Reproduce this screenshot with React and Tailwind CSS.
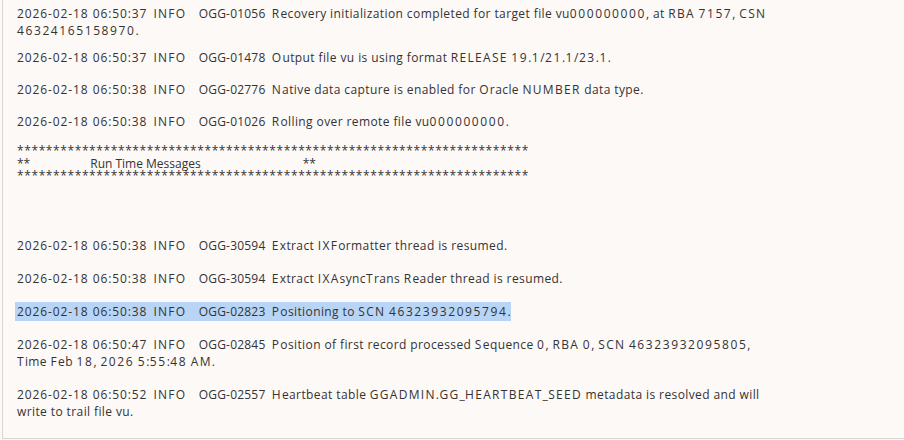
import React from "react";

const entries = [
  { t: "2026-02-18 06:50:37", c: "OGG-01056", m: "Recovery initialization completed for target file vu000000000, at RBA 7157, CSN 46324165158970." },
  { t: "2026-02-18 06:50:37", c: "OGG-01478", m: "Output file vu is using format RELEASE 19.1/21.1/23.1." },
  { t: "2026-02-18 06:50:38", c: "OGG-02776", m: "Native data capture is enabled for Oracle NUMBER data type." },
  { t: "2026-02-18 06:50:38", c: "OGG-01026", m: "Rolling over remote file vu000000000." },
];

const entries2 = [
  { t: "2026-02-18 06:50:38", c: "OGG-30594", m: "Extract IXFormatter thread is resumed." },
  { t: "2026-02-18 06:50:38", c: "OGG-30594", m: "Extract IXAsyncTrans Reader thread is resumed." },
  { t: "2026-02-18 06:50:38", c: "OGG-02823", m: "Positioning to SCN 46323932095794.", hl: true },
  { t: "2026-02-18 06:50:47", c: "OGG-02845", m: "Position of first record processed Sequence 0, RBA 0, SCN 46323932095805, Time Feb 18, 2026 5:55:48 AM." },
  { t: "2026-02-18 06:50:52", c: "OGG-02557", m: "Heartbeat table GGADMIN.GG_HEARTBEAT_SEED metadata is resolved and will write to trail file vu." },
];

// Split message into runs of digits, uppercase letters and other characters,
// so each run can get the letter spacing that matches the reference font widths.
function Msg({ text }) {
  const parts = text.match(/[0-9]+|[A-Z]+|[^0-9A-Z]+/g) || [];
  return parts.map((p, i) => {
    let cls = "tracking-[0.4px]";
    if (/^[0-9]/.test(p)) cls = "tracking-[1.6px]";
    else if (/^[A-Z]/.test(p)) cls = "tracking-[1.3px]";
    return (
      <span key={i} className={cls}>
        {p}
      </span>
    );
  });
}

function Entry({ e, className = "" }) {
  return (
    <p className={"whitespace-pre-wrap " + className}>
      <span className={e.hl ? "bg-[#b8d5f6] -ml-[2px] pl-[2px] py-[1px]" : ""}>
        <span className="tracking-[0.9px]">{e.t}</span>
        {"  "}
        <span className="tracking-[1.2px]">INFO</span>
        {"    "}
        <span className="tracking-[0.2px]">{e.c}</span>
        {"  "}
        <Msg text={e.m} />
      </span>
    </p>
  );
}

const stars = "*".repeat(71);

export default function App() {
  return (
    <div className="w-[904px] h-[440px] bg-[#fdf9f7] overflow-hidden">
      <div
        className="ml-[2px] h-[439px] border-l border-b border-[#d9d5d3] pl-[14px] pt-[5px] text-[#333333] text-[12px] leading-[17px]"
        style={{ fontFamily: '"Open Sans", sans-serif' }}
      >
        <div className="w-[756px] flex flex-col">
          <div className="flex flex-col gap-[15px]">
            <Entry e={entries[0]} className="-mb-[5px]" />
            {entries.slice(1).map((e, i) => <Entry key={i} e={e} />)}
            <div className="leading-[12.5px]">
              <div className="tracking-[0.6px]">{stars}</div>
              <div className="flex">
                <span>**</span>
                <span className="ml-[60px]">Run Time Messages</span>
                <span className="ml-[102px]">**</span>
              </div>
              <div className="tracking-[0.6px]">{stars}</div>
            </div>
          </div>
          <div className="h-[54px]" />
          <div className="flex flex-col gap-[16px]">
            {entries2.map((e, i) => <Entry key={i} e={e} />)}
          </div>
        </div>
      </div>
    </div>
  );
}
